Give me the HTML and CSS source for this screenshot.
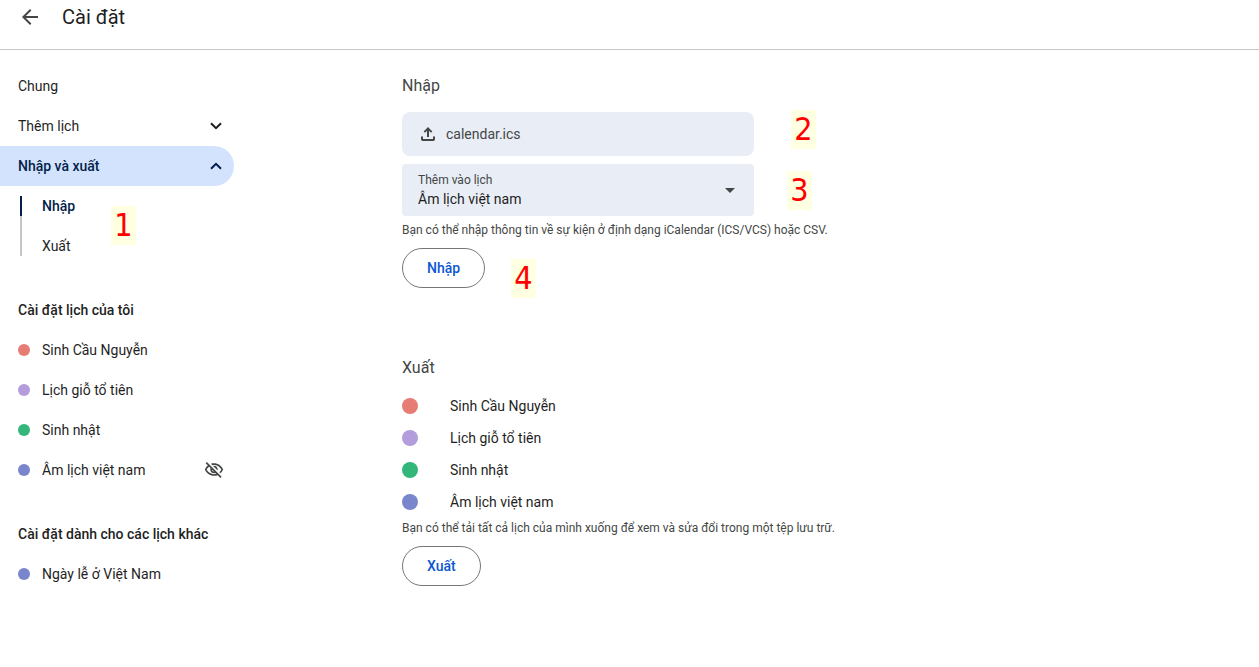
FILE: index.html
```html
<!DOCTYPE html>
<html lang="vi">
<head>
    <meta charset="UTF-8">
    <meta name="viewport" content="width=device-width, initial-scale=1.0">
    <title>Cài đặt</title>
    <link rel="stylesheet" href="styles.css">
</head>
<body>
    <header class="topbar">
        <button type="button" class="back" aria-label="Quay lại">
            <svg width="24" height="24" viewBox="0 0 24 24"><path d="M20 11H7.83l5.59-5.59L12 4l-8 8 8 8 1.41-1.41L7.83 13H20v-2z"/></svg>
        </button>
        <h1>Cài đặt</h1>
    </header>

    <div class="layout">
        <nav class="sidebar">
            <a href="#" class="nav-item">Chung</a>
            <button type="button" class="nav-item">
                Thêm lịch
                <svg class="chevron" width="12" height="8" viewBox="0 0 12 8"><path d="M1 1.2l5 5 5-5"/></svg>
            </button>
            <button type="button" class="nav-item active">
                Nhập và xuất
                <svg class="chevron" width="12" height="8" viewBox="0 0 12 8"><path d="M1 6.8l5-5 5 5"/></svg>
            </button>
            <div class="subnav">
                <a href="#import" class="current">Nhập</a>
                <a href="#export">Xuất</a>
                <span class="step step-1">1</span>
            </div>

            <h2>Cài đặt lịch của tôi</h2>
            <a href="#" class="nav-item"><span class="dot red"></span>Sinh Cầu Nguyễn</a>
            <a href="#" class="nav-item"><span class="dot purple"></span>Lịch giỗ tổ tiên</a>
            <a href="#" class="nav-item"><span class="dot green"></span>Sinh nhật</a>
            <a href="#" class="nav-item">
                <span class="dot blue"></span>Âm lịch việt nam
                <svg class="hidden-icon" width="20" height="20" viewBox="0 0 24 24"><path d="M12 6c3.79 0 7.17 2.13 8.82 5.5-.59 1.22-1.42 2.27-2.41 3.12l1.41 1.41c1.39-1.23 2.49-2.77 3.18-4.53C21.27 7.11 17 4 12 4c-1.27 0-2.49.2-3.64.57l1.65 1.65C10.66 6.09 11.32 6 12 6zm-1.07 1.14L13 9.21c.57.25 1.03.71 1.28 1.28l2.07 2.07c.08-.34.14-.7.14-1.07C16.5 9.01 14.48 7 12 7c-.37 0-.72.05-1.07.14zM2.01 3.87l2.68 2.68C3.06 7.83 1.77 9.53 1 11.5 2.73 15.89 7 19 12 19c1.52 0 2.98-.29 4.32-.82l3.42 3.42 1.41-1.41L3.42 2.45 2.01 3.87zm7.5 7.5l2.61 2.61c-.04.01-.08.02-.12.02-1.38 0-2.5-1.12-2.5-2.5 0-.05.01-.08.01-.13zm-3.4-3.4l1.75 1.75c-.23.55-.36 1.15-.36 1.78 0 2.48 2.02 4.5 4.5 4.5.63 0 1.23-.13 1.77-.36l.98.98c-.88.24-1.8.38-2.75.38-3.79 0-7.17-2.13-8.82-5.5.7-1.43 1.72-2.61 2.93-3.53z"/></svg>
            </a>

            <h2>Cài đặt dành cho các lịch khác</h2>
            <a href="#" class="nav-item"><span class="dot blue"></span>Ngày lễ ở Việt Nam</a>
        </nav>

        <main class="content">
            <section id="import" class="import">
                <h2>Nhập</h2>
                <div class="field-row">
                    <input type="file" id="file" class="file-input" accept=".ics,.vcs,.csv">
                    <label for="file" class="file-label">
                        <svg width="20" height="20" viewBox="0 0 20 20"><path d="M9 13V6.8L7 8.8 5.6 7.4 10 3l4.400 4.400L13 8.800l-2-2V13H9zM3 12.500h2V15h10v-2.500h2V15q0 .8-.6 1.400T15 17H5q-.8 0-1.400-.6T3 15v-2.500z"/></svg>
                        calendar.ics
                    </label>
                    <span class="step step-2">2</span>
                </div>
                <div class="field-row">
                    <label for="calendar" class="select-label">Thêm vào lịch</label>
                    <select id="calendar" class="calendar-select">
                        <option>Âm lịch việt nam</option>
                        <option>Sinh Cầu Nguyễn</option>
                        <option>Lịch giỗ tổ tiên</option>
                        <option>Sinh nhật</option>
                    </select>
                    <svg class="arrow" width="10" height="5" viewBox="0 0 10 5"><path d="M0 0h10L5 5z"/></svg>
                    <span class="step step-3">3</span>
                </div>
                <p class="help">Bạn có thể nhập thông tin về sự kiện ở định dạng iCalendar (ICS/VCS) hoặc CSV.</p>
                <div class="action">
                    <button type="button" class="btn">Nhập</button>
                    <span class="step step-4">4</span>
                </div>
            </section>

            <section id="export">
                <h2>Xuất</h2>
                <ul class="calendars">
                    <li><span class="dot red"></span>Sinh Cầu Nguyễn</li>
                    <li><span class="dot purple"></span>Lịch giỗ tổ tiên</li>
                    <li><span class="dot green"></span>Sinh nhật</li>
                    <li><span class="dot blue"></span>Âm lịch việt nam</li>
                </ul>
                <p class="help">Bạn có thể tải tất cả lịch của mình xuống để xem và sửa đổi trong một tệp lưu trữ.</p>
                <div class="action">
                    <button type="button" class="btn">Xuất</button>
                </div>
            </section>
        </main>
    </div>
</body>
</html>
```
FILE: styles.css
```css
* {
    box-sizing: border-box;
}

body {
    font-family: Roboto, 'Noto Sans', sans-serif;
    font-size: 14px;
    line-height: 20px;
    margin: 0;
    color: #1f1f1f;
    background: #fff;
}

h1, h2, p, ul {
    margin: 0;
    padding: 0;
}

a {
    color: inherit;
    text-decoration: none;
}

button {
    font: inherit;
    color: inherit;
    background: none;
    border: 0;
    padding: 0;
    cursor: pointer;
}

/* top bar */
.topbar {
    display: flex;
    align-items: center;
    gap: 20px;
    padding: 3px 18px 18px;
    border-bottom: 1px solid #c4c7c5;
}
.topbar h1 {
    font-size: 20px;
    font-weight: 400;
    line-height: 28px;
}
.back {
    display: flex;
}
.back svg {
    fill: #444746;
}

.layout {
    display: flex;
    padding-top: 16px;
}

/* sidebar */
.sidebar {
    flex: none;
    width: 234px;
}
.nav-item {
    display: flex;
    align-items: center;
    width: 100%;
    height: 40px;
    padding: 0 12px 0 18px;
}
.nav-item.active {
    background: #d3e3fd;
    color: #041e49;
    font-weight: 500;
    border-radius: 0 20px 20px 0;
}
.chevron {
    margin-left: auto;
    fill: none;
    stroke: currentColor;
    stroke-width: 2;
}
.hidden-icon {
    margin-left: auto;
    margin-right: -2px;
    fill: #444746;
}
.sidebar h2 {
    margin-top: 24px;
    padding-left: 18px;
    font-size: 14px;
    font-weight: 500;
    line-height: 40px;
}

.subnav {
    position: relative;
    padding: 10px 0 10px 20px;
}
.subnav a {
    display: block;
    height: 40px;
    padding-left: 20px;
    border-left: 2px solid #c4c7c5;
}
.subnav a:nth-child(2) {
    height: 20px;
}
.subnav .current {
    border-image: linear-gradient(#041e49 50%, #c4c7c5 50%) 1;
    color: #041e49;
    font-weight: 500;
}

.dot {
    flex: none;
    width: 12px;
    height: 12px;
    margin-right: 12px;
    border-radius: 50%;
}
.red { background: #e67c73; }
.purple { background: #b39ddb; }
.green { background: #33b679; }
.blue { background: #7986cb; }

/* main column */
.content {
    flex: 1;
    max-width: 688px;
    margin-left: 168px;
}
.content h2 {
    color: #444746;
    font-size: 16px;
    font-weight: 400;
    line-height: 24px;
    padding: 8px 0 6px;
}
.import {
    padding-bottom: 60px;
}
.field-row {
    position: relative;
    max-width: 352px;
    margin: 8px 0 6px;
}
.file-input {
    position: absolute;
    inset: 0;
    width: 100%;
    opacity: 0;
}
.file-label {
    position: relative;
    display: flex;
    align-items: center;
    gap: 8px;
    height: 44px;
    padding: 0 16px;
    border-radius: 8px;
    background: #e9eef6;
    color: #444746;
    cursor: pointer;
}
.file-label svg, .arrow {
    fill: #444746;
}
.select-label {
    position: absolute;
    top: 8px;
    left: 16px;
    font-size: 12px;
    line-height: 16px;
    color: #444746;
    pointer-events: none;
}
.calendar-select {
    appearance: none;
    display: block;
    width: 100%;
    height: 52px;
    padding: 20px 40px 2px 16px;
    border: 0;
    border-radius: 4px;
    background: #e9eef6;
    color: #1f1f1f;
    font: inherit;
}
.arrow {
    position: absolute;
    top: 24px;
    right: 19px;
    pointer-events: none;
}
.help {
    font-size: 12px;
    line-height: 16px;
    color: #444746;
}
.action {
    position: relative;
    margin-top: 10px;
}
.btn {
    height: 40px;
    padding: 0 24px;
    border: 1px solid #747775;
    border-radius: 20px;
    color: #0b57d0;
    font-weight: 500;
}

.calendars {
    list-style: none;
    padding: 4px 0 2px;
}
.calendars li {
    display: flex;
    align-items: center;
    height: 32px;
}
.calendars .dot {
    width: 16px;
    height: 16px;
    margin-right: 32px;
}

/* step numbers over the page */
.step {
    position: absolute;
    width: 25px;
    background: #ffffe1;
    color: #f00;
    font-family: 'DejaVu Sans Condensed', 'DejaVu Sans', sans-serif;
    font-size: 32px;
    font-weight: 400;
    line-height: 39px;
    text-align: center;
}
.step-1 { left: 111px; top: 20px; }
.step-2 { left: 389px; top: -2px; }
.step-3 { left: 385px; top: 7px; }
.step-4 { left: 109px; top: 11px; }
```
